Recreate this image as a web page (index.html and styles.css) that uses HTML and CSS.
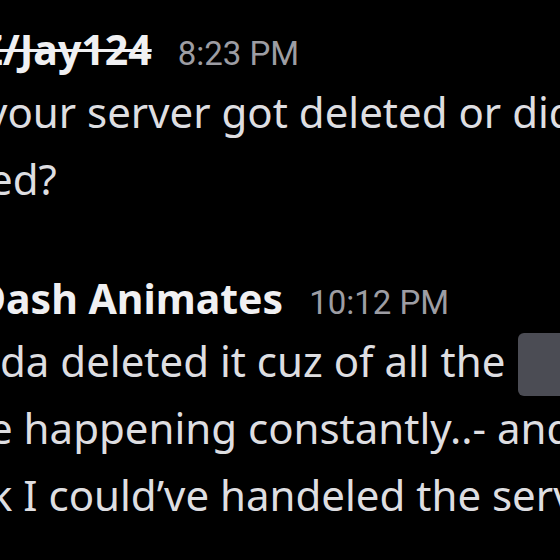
FILE: index.html
```html
<!DOCTYPE html>
<html lang="en">
<head>
<meta charset="utf-8">
<title>Chat</title>
<link rel="stylesheet" href="styles.css">
</head>
<body>
<main class="chat">
  <section class="message first">
    <header class="meta">
      <span class="name name-jay"><s>Z/Jay124</s></span>
      <time class="stamp">8:23 PM</time>
    </header>
    <div class="body">
      <div class="line l-your">your server got deleted or did it get</div>
      <div class="line l-ed">ed?</div>
    </div>
  </section>
  <section class="message second">
    <header class="meta">
      <span class="name name-dash">Dash Animates</span>
      <time class="stamp">10:12 PM</time>
    </header>
    <div class="body">
      <div class="line l-da">da deleted it cuz of all the <span class="spoiler"></span></div>
      <div class="line l-e">e happening constantly..- and I</div>
      <div class="line l-k">k I could’ve handeled the server</div>
    </div>
  </section>
</main>
</body>
</html>
```
FILE: styles.css
```css
html, body {
  margin: 0;
  padding: 0;
  background: #000;
  overflow: hidden;
  width: 560px;
  height: 560px;
}

.chat {
  padding-top: 20px;
  font-family: "Noto Sans", "DejaVu Sans", sans-serif;
}

.message.second {
  margin-top: 57px;
}

.meta {
  display: flex;
  align-items: baseline;
  gap: 26px;
  height: 58px;
  line-height: 58px;
  white-space: nowrap;
}

.name {
  font-weight: 700;
  font-size: 41px;
  color: #f0f0f2;
}

.name s {
  text-decoration-thickness: 3px;
}

.name-jay {
  margin-left: -21px;
}

.name-dash {
  margin-left: -24px;
}

.stamp {
  font-family: Roboto, "Liberation Sans", sans-serif;
  font-size: 33px;
  color: #9d9da3;
}

.body {
  font-size: 42px;
  line-height: 67px;
  color: #dedee1;
}

.line {
  white-space: nowrap;
  height: 67px;
}

.l-your { margin-left: -14px; }
.l-ed { margin-left: -11px; }
.l-da { margin-left: 0; }
.l-e { margin-left: -11px; }
.l-k { margin-left: -10px; }

.spoiler {
  display: inline-block;
  width: 70px;
  height: 63px;
  margin-top: 6px;
  margin-left: 2px;
  vertical-align: top;
  background: #4b4c54;
  border-radius: 6px;
}
```
